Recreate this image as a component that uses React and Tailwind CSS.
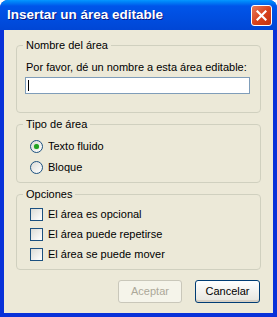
import { useState } from 'react';

const font = { fontFamily: '"Liberation Sans", Arial, sans-serif' };

function GroupBox({ title, className, children }) {
  return (
    <fieldset className={`border border-[#D0D0BF] rounded-[4px] px-[9px] ${className}`}>
      <legend className="ml-[-3px] px-[3px] leading-[13px] text-black">{title}</legend>
      {children}
    </fieldset>
  );
}

function Radio({ checked, label }) {
  return (
    <div className="flex items-center h-[21px] ml-[4px]">
      <span className="w-[13px] h-[13px] rounded-full border border-[#1C5180] bg-gradient-to-br from-[#DCDCD7] to-white flex items-center justify-center">
        {checked && <span className="w-[5px] h-[5px] rounded-full bg-[#21A121] shadow-[0_0_1px_#5ED15E]" />}
      </span>
      <span className="ml-[5px] leading-[13px]">{label}</span>
    </div>
  );
}

function Check({ label }) {
  return (
    <div className="flex items-center h-[20px] ml-[4px]">
      <span className="w-[13px] h-[13px] border border-[#1C5180] bg-gradient-to-br from-[#DCDCD7] to-white" />
      <span className="ml-[5px] leading-[13px]">{label}</span>
    </div>
  );
}

export default function App() {
  const [name, setName] = useState('');

  return (
    <div className="w-[277px] h-[317px] flex flex-col bg-[#0831D9] rounded-t-[8px] overflow-hidden text-[11px]" style={font}>
      {/* Title bar */}
      <div className="h-[30px] flex items-center pl-[7px] pr-[5px] bg-gradient-to-b from-[#0997FF] via-[#0055EA] via-20% to-[#0046D5]">
        <span className="flex-1 text-white font-bold text-[13.5px] [text-shadow:1px_1px_0_#0A1883]">
          Insertar un área editable
        </span>
        <button className="w-[21px] h-[21px] rounded-[3px] border border-white bg-gradient-to-br from-[#E5795A] via-[#D9431C] to-[#C23210] flex items-center justify-center">
          <svg width="11" height="11" viewBox="0 0 11 11">
            <path d="M1.5 1.5 L9.5 9.5 M9.5 1.5 L1.5 9.5" stroke="white" strokeWidth="2.2" strokeLinecap="square" />
          </svg>
        </button>
      </div>

      {/* Body */}
      <div className="flex-1 mx-[4px] mb-[4px] bg-[#ECE9D8] px-[12px] pt-[9px] flex flex-col">
        <GroupBox title="Nombre del área" className="h-[74px]">
          <p className="mt-[9px] leading-[13px]">Por favor, dé un nombre a esta área editable:</p>
          <div className="relative mt-[3px] ml-[-1px] w-[225px]">
            <input
              value={name}
              onChange={e => setName(e.target.value)}
              className="w-full h-[17px] border border-[#7F9DB9] bg-white px-[2px] outline-none text-[11px]"
            />
            {name === '' && <span className="absolute left-[3px] top-[3px] w-[1px] h-[11px] bg-black" />}
          </div>
        </GroupBox>

        <GroupBox title="Tipo de área" className="mt-[5px] h-[65px]">
          <div className="mt-[5px]">
            <Radio checked label="Texto fluido" />
            <Radio label="Bloque" />
          </div>
        </GroupBox>

        <GroupBox title="Opciones" className="mt-[5px] h-[82px]">
          <div className="mt-[3px]">
            <Check label="El área es opcional" />
            <Check label="El área puede repetirse" />
            <Check label="El área se puede mover" />
          </div>
        </GroupBox>

        <div className="flex justify-end gap-[13px] mt-[10px] pr-[1px]">
          <button disabled className="w-[64px] h-[23px] rounded-[3px] border border-[#C9C7BA] bg-[#F5F4EA] text-[#ACA899]">
            Aceptar
          </button>
          <button className="w-[65px] h-[23px] rounded-[3px] border border-[#003C74] bg-gradient-to-b from-white to-[#E6E5DE] text-black shadow-[inset_0_-2px_0_#D6D0C5]">
            Cancelar
          </button>
        </div>
      </div>
    </div>
  );
}
